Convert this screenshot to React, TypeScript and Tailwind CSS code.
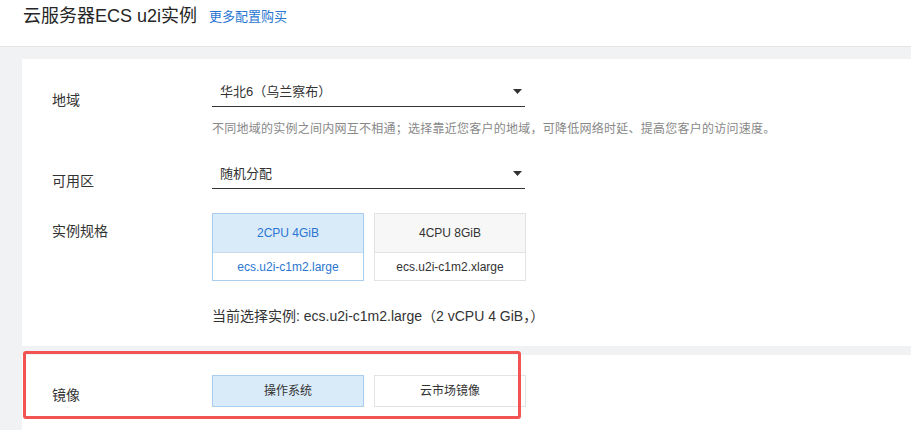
import React from 'react';

const font = 'font-["Liberation_Sans","Noto_Sans_CJK_SC",sans-serif]';

interface SpecProps {
  cpu: string;
  name: string;
  active?: boolean;
}

const SpecCard: React.FC<SpecProps> = ({ cpu, name, active = false }) => (
  <div
    className={`w-[152px] h-[68px] flex flex-col border text-[12px] ${
      active ? 'border-[#a9cdee] text-[#2b76d2]' : 'border-[#e3e3e3] text-[#333]'
    }`}
  >
    <div
      className={`h-[39px] flex items-center justify-center border-b ${
        active ? 'bg-[#d9eaf8] border-[#c9dcee]' : 'bg-[#f7f7f7] border-[#e3e3e3]'
      }`}
    >
      {cpu}
    </div>
    <div className="flex-1 flex items-center justify-center bg-white">{name}</div>
  </div>
);

const Select: React.FC<{ value: string }> = ({ value }) => (
  <div className="w-[313px] h-[32px] border-b border-[#333] flex items-center justify-between pl-[8px] pr-[2px] pt-[2px]">
    <span className="text-[13px] text-[#333]">{value}</span>
    {/* 드롭다운 삼각형 */}
    <svg width="9" height="5" viewBox="0 0 9 5" className="mr-[1px]">
      <path d="M0 0h9L4.5 5z" fill="#333" />
    </svg>
  </div>
);

const App: React.FC = () => {
  return (
    <div className={`relative w-[911px] h-[430px] overflow-hidden bg-[#f1f2f4] ${font}`}>
      {/* 헤더 */}
      <div className="h-[47px] bg-white border-b border-[#e4e5e7] flex items-start pl-[23px] pt-[4px]">
        <span className="text-[18px] leading-[24px] text-[#262626]">云服务器ECS u2i实例</span>
        <a className="ml-[12px] mt-[3px] text-[13px] leading-[20px] text-[#2b76d2]">更多配置购买</a>
      </div>

      <div className="pl-[22px] pt-[12px]">
        {/* 기본 설정 카드 */}
        <div className="bg-white pt-[16px] pb-[20px] pl-[30px]">
          <div className="flex">
            <div className="w-[160px] pt-[15px] text-[14px] leading-[20px] text-[#333]">地域</div>
            <div>
              <Select value="华北6（乌兰察布）" />
              <div className="mt-[14px] text-[12px] leading-[16px] tracking-[0.25px] text-[#888]">
                不同地域的实例之间内网互不相通；选择靠近您客户的地域，可降低网络时延、提高您客户的访问速度。
              </div>
            </div>
          </div>

          <div className="flex mt-[20px]">
            <div className="w-[160px] pt-[14px] text-[14px] leading-[20px] text-[#333]">可用区</div>
            <Select value="随机分配" />
          </div>

          <div className="flex mt-[22px]">
            <div className="w-[160px] pt-[8px] text-[14px] leading-[20px] text-[#333]">实例规格</div>
            <div>
              <div className="flex gap-[10px]">
                <SpecCard cpu="2CPU 4GiB" name="ecs.u2i-c1m2.large" active />
                <SpecCard cpu="4CPU 8GiB" name="ecs.u2i-c1m2.xlarge" />
              </div>
              <div className="mt-[25px] text-[14px] leading-[20px] text-[#333]">
                当前选择实例: ecs.u2i-c1m2.large（2 vCPU 4 GiB，）
              </div>
            </div>
          </div>
        </div>

        {/* 镜像 카드 */}
        <div className="mt-[9px] bg-white pt-[20px] pl-[30px] h-[100px]">
          <div className="flex">
            <div className="w-[160px] pt-[10px] text-[14px] leading-[20px] text-[#333]">镜像</div>
            <div className="flex gap-[10px]">
              <div className="w-[152px] h-[32px] flex items-center justify-center border border-[#a9cdee] bg-[#d9eaf8] text-[12px] text-[#333]">
                操作系统
              </div>
              <div className="w-[152px] h-[32px] flex items-center justify-center border border-[#e3e3e3] bg-white text-[12px] text-[#333]">
                云市场镜像
              </div>
            </div>
          </div>
        </div>
      </div>

      {/* 강조 표시 박스 */}
      <div className="absolute left-[23px] top-[351px] w-[498px] h-[68px] border-[3px] border-[#f25353] rounded-[3px] pointer-events-none" />
    </div>
  );
};

export default App;
